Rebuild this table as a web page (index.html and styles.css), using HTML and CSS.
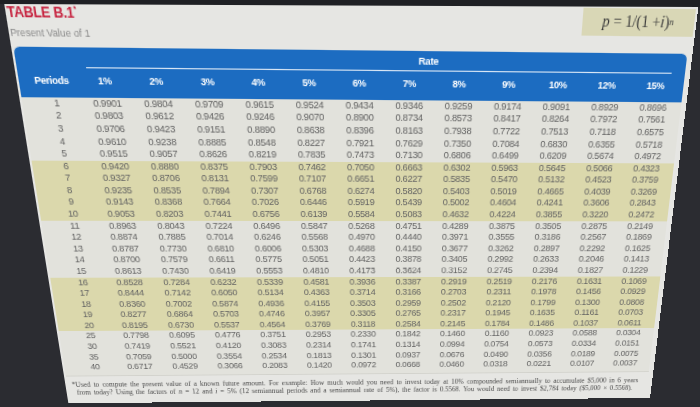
FILE: index.html
```html
<!DOCTYPE html>
<html>
<head>
<meta charset="utf-8">
<link rel="stylesheet" href="styles.css">
</head>
<body>
<div class="screen">
  <div class="sheet">
    <div class="top">
      <div class="heading">
        <div class="title">TABLE B.1<sup>*</sup></div>
        <div class="subtitle">Present Value of 1</div>
      </div>
      <div class="formula"><i>p</i>&nbsp;= 1/(1 + <i>i</i>)<sup><i>n</i></sup></div>
    </div>
    <div class="table">
      <div class="thead">
        <div class="rate">Rate</div>
        <div class="rule"></div>
        <div class="cols"><span>Periods</span><span>1%</span><span>2%</span><span>3%</span><span>4%</span><span>5%</span><span>6%</span><span>7%</span><span>8%</span><span>9%</span><span>10%</span><span>12%</span><span>15%</span></div>
      </div>
      <div class="tbody">
        <div class="row"><span>1</span><span>0.9901</span><span>0.9804</span><span>0.9709</span><span>0.9615</span><span>0.9524</span><span>0.9434</span><span>0.9346</span><span>0.9259</span><span>0.9174</span><span>0.9091</span><span>0.8929</span><span>0.8696</span></div>
        <div class="row"><span>2</span><span>0.9803</span><span>0.9612</span><span>0.9426</span><span>0.9246</span><span>0.9070</span><span>0.8900</span><span>0.8734</span><span>0.8573</span><span>0.8417</span><span>0.8264</span><span>0.7972</span><span>0.7561</span></div>
        <div class="row"><span>3</span><span>0.9706</span><span>0.9423</span><span>0.9151</span><span>0.8890</span><span>0.8638</span><span>0.8396</span><span>0.8163</span><span>0.7938</span><span>0.7722</span><span>0.7513</span><span>0.7118</span><span>0.6575</span></div>
        <div class="row"><span>4</span><span>0.9610</span><span>0.9238</span><span>0.8885</span><span>0.8548</span><span>0.8227</span><span>0.7921</span><span>0.7629</span><span>0.7350</span><span>0.7084</span><span>0.6830</span><span>0.6355</span><span>0.5718</span></div>
        <div class="row"><span>5</span><span>0.9515</span><span>0.9057</span><span>0.8626</span><span>0.8219</span><span>0.7835</span><span>0.7473</span><span>0.7130</span><span>0.6806</span><span>0.6499</span><span>0.6209</span><span>0.5674</span><span>0.4972</span></div>
        <div class="row band"><span>6</span><span>0.9420</span><span>0.8880</span><span>0.8375</span><span>0.7903</span><span>0.7462</span><span>0.7050</span><span>0.6663</span><span>0.6302</span><span>0.5963</span><span>0.5645</span><span>0.5066</span><span>0.4323</span></div>
        <div class="row band"><span>7</span><span>0.9327</span><span>0.8706</span><span>0.8131</span><span>0.7599</span><span>0.7107</span><span>0.6651</span><span>0.6227</span><span>0.5835</span><span>0.5470</span><span>0.5132</span><span>0.4523</span><span>0.3759</span></div>
        <div class="row band"><span>8</span><span>0.9235</span><span>0.8535</span><span>0.7894</span><span>0.7307</span><span>0.6768</span><span>0.6274</span><span>0.5820</span><span>0.5403</span><span>0.5019</span><span>0.4665</span><span>0.4039</span><span>0.3269</span></div>
        <div class="row band"><span>9</span><span>0.9143</span><span>0.8368</span><span>0.7664</span><span>0.7026</span><span>0.6446</span><span>0.5919</span><span>0.5439</span><span>0.5002</span><span>0.4604</span><span>0.4241</span><span>0.3606</span><span>0.2843</span></div>
        <div class="row band"><span>10</span><span>0.9053</span><span>0.8203</span><span>0.7441</span><span>0.6756</span><span>0.6139</span><span>0.5584</span><span>0.5083</span><span>0.4632</span><span>0.4224</span><span>0.3855</span><span>0.3220</span><span>0.2472</span></div>
        <div class="row"><span>11</span><span>0.8963</span><span>0.8043</span><span>0.7224</span><span>0.6496</span><span>0.5847</span><span>0.5268</span><span>0.4751</span><span>0.4289</span><span>0.3875</span><span>0.3505</span><span>0.2875</span><span>0.2149</span></div>
        <div class="row"><span>12</span><span>0.8874</span><span>0.7885</span><span>0.7014</span><span>0.6246</span><span>0.5568</span><span>0.4970</span><span>0.4440</span><span>0.3971</span><span>0.3555</span><span>0.3186</span><span>0.2567</span><span>0.1869</span></div>
        <div class="row"><span>13</span><span>0.8787</span><span>0.7730</span><span>0.6810</span><span>0.6006</span><span>0.5303</span><span>0.4688</span><span>0.4150</span><span>0.3677</span><span>0.3262</span><span>0.2897</span><span>0.2292</span><span>0.1625</span></div>
        <div class="row"><span>14</span><span>0.8700</span><span>0.7579</span><span>0.6611</span><span>0.5775</span><span>0.5051</span><span>0.4423</span><span>0.3878</span><span>0.3405</span><span>0.2992</span><span>0.2633</span><span>0.2046</span><span>0.1413</span></div>
        <div class="row"><span>15</span><span>0.8613</span><span>0.7430</span><span>0.6419</span><span>0.5553</span><span>0.4810</span><span>0.4173</span><span>0.3624</span><span>0.3152</span><span>0.2745</span><span>0.2394</span><span>0.1827</span><span>0.1229</span></div>
        <div class="row band"><span>16</span><span>0.8528</span><span>0.7284</span><span>0.6232</span><span>0.5339</span><span>0.4581</span><span>0.3936</span><span>0.3387</span><span>0.2919</span><span>0.2519</span><span>0.2176</span><span>0.1631</span><span>0.1069</span></div>
        <div class="row band"><span>17</span><span>0.8444</span><span>0.7142</span><span>0.6050</span><span>0.5134</span><span>0.4363</span><span>0.3714</span><span>0.3166</span><span>0.2703</span><span>0.2311</span><span>0.1978</span><span>0.1456</span><span>0.0929</span></div>
        <div class="row band"><span>18</span><span>0.8360</span><span>0.7002</span><span>0.5874</span><span>0.4936</span><span>0.4155</span><span>0.3503</span><span>0.2959</span><span>0.2502</span><span>0.2120</span><span>0.1799</span><span>0.1300</span><span>0.0808</span></div>
        <div class="row band"><span>19</span><span>0.8277</span><span>0.6864</span><span>0.5703</span><span>0.4746</span><span>0.3957</span><span>0.3305</span><span>0.2765</span><span>0.2317</span><span>0.1945</span><span>0.1635</span><span>0.1161</span><span>0.0703</span></div>
        <div class="row band"><span>20</span><span>0.8195</span><span>0.6730</span><span>0.5537</span><span>0.4564</span><span>0.3769</span><span>0.3118</span><span>0.2584</span><span>0.2145</span><span>0.1784</span><span>0.1486</span><span>0.1037</span><span>0.0611</span></div>
        <div class="row"><span>25</span><span>0.7798</span><span>0.6095</span><span>0.4776</span><span>0.3751</span><span>0.2953</span><span>0.2330</span><span>0.1842</span><span>0.1460</span><span>0.1160</span><span>0.0923</span><span>0.0588</span><span>0.0304</span></div>
        <div class="row"><span>30</span><span>0.7419</span><span>0.5521</span><span>0.4120</span><span>0.3083</span><span>0.2314</span><span>0.1741</span><span>0.1314</span><span>0.0994</span><span>0.0754</span><span>0.0573</span><span>0.0334</span><span>0.0151</span></div>
        <div class="row"><span>35</span><span>0.7059</span><span>0.5000</span><span>0.3554</span><span>0.2534</span><span>0.1813</span><span>0.1301</span><span>0.0937</span><span>0.0676</span><span>0.0490</span><span>0.0356</span><span>0.0189</span><span>0.0075</span></div>
        <div class="row"><span>40</span><span>0.6717</span><span>0.4529</span><span>0.3066</span><span>0.2083</span><span>0.1420</span><span>0.0972</span><span>0.0668</span><span>0.0460</span><span>0.0318</span><span>0.0221</span><span>0.0107</span><span>0.0037</span></div>
      </div>
    </div>
    <div class="note">
      <div class="l1">*Used to compute the present value of a known future amount. For example: How much would you need to invest today at 10% compounded semiannually to accumulate $5,000 in 6 years</div>
      <div class="l2">from today? Using the factors of <i>n</i> = 12 and <i>i</i> = 5% (12 semiannual periods and a semiannual rate of 5%), the factor is 0.5568. You would need to invest $2,784 today ($5,000 × 0.5568).</div>
    </div>
  </div>
</div>
<div class="bezel"></div>
</body>
</html>
```
FILE: styles.css
```css
html, body {
  margin: 0;
  padding: 0;
}
html {
  overflow: hidden;
}
body {
  width: 700px;
  height: 407px;
  overflow: hidden;
  position: relative;
  background: #2b2c31;
  font-family: "Liberation Sans", Arial, sans-serif;
}
/* the photographed screen: a flat layout mapped onto the tilted plane */
.screen {
  width: 652.28px;
  height: 402.5px;
  overflow: hidden;
  transform-origin: 0 0;
  transform: matrix3d(1.144881, 0.015185, 0, 0.000063621, 0.198559, 1.224921, 0, 0.000500382, 0, 0, 1, 0, -18.379, -8.854, 0, 1);
}
.sheet {
  margin-left: 18.4px;
  width: 633.88px;
  height: 402.5px;
  background: #e6e6e3;
  display: flex;
  flex-direction: column;
}
.top {
  height: 45.54px;
  flex: none;
  display: flex;
  justify-content: space-between;
  align-items: flex-start;
}
.heading {
  padding: 9.52px 0 0 0.92px;
}
.title {
  font-size: 11.96px;
  line-height: 14.72px;
  font-weight: bold;
  color: #c6203d;
  letter-spacing: -0.18px;
}
.title sup {
  font-size: 6.44px;
  line-height: 0;
  vertical-align: 4.6px;
}
.subtitle {
  margin-top: 4.6px;
  font-size: 8.74px;
  line-height: 11.04px;
  color: #8a8a8a;
}
.formula {
  margin-top: 7.27px;
  margin-right: 2.76px;
  width: 105.8px;
  height: 23.92px;
  background: #d9d7b6;
  display: flex;
  align-items: center;
  justify-content: center;
  font-family: "Liberation Serif", "Times New Roman", serif;
  font-size: 13.8px;
  color: #3a3a3a;
}
.formula sup {
  font-size: 8.28px;
  line-height: 0;
  vertical-align: 5.52px;
}
.table {
  margin-left: 1.2px;
  width: 627.44px;
  flex: none;
}
.thead {
  box-sizing: border-box;
  height: 44.34px;
  padding-top: 4.6px;
  background: #1c6cc1;
  border-radius: 5.52px 5.52px 0 0;
  color: #ffffff;
  font-weight: bold;
  font-size: 9.2px;
}
.rate {
  padding-left: 371.68px;
  line-height: 11.04px;
  letter-spacing: -0.28px;
}
.rule {
  margin: 1.84px 0 0 63.2px;
  width: 551.08px;
  height: 1.38px;
  background: #dbe8f6;
}
.cols {
  margin-top: 5.98px;
  display: grid;
  grid-template-columns: 55.2px repeat(12, 47.38px);
  line-height: 11.04px;
  letter-spacing: -0.37px;
  text-align: center;
}
.cols span:first-child {
  padding-left: 5.52px;
}
.tbody {
  background: #e2e2dc;
  padding-bottom: 3.22px;
  border-bottom: 0.92px solid #d2d2cc;
}
.row {
  display: grid;
  grid-template-columns: 55.2px repeat(12, 47.38px);
  height: 11.592px;
  line-height: 11.592px;
  font-size: 9.2px;
  color: #626262;
  text-align: center;
  letter-spacing: -0.28px;
}
.row.band {
  background: #dbd8ac;
}
.row span:first-child {
  padding-left: 9.2px;
}
.note {
  margin-top: 4.78px;
  font-family: "Liberation Serif", "Times New Roman", serif;
  font-size: 7.54px;
  line-height: 9.66px;
  color: #4a4a4a;
}
.l1 {
  margin-left: 6.44px;
  width: 611.52px;
  text-align: justify;
  text-align-last: justify;
}
.l2 {
  margin-left: 10.3px;
  width: 602.05px;
  text-align: justify;
  text-align-last: justify;
}
.bezel {
  position: absolute;
  left: 0;
  top: 0;
  width: 700px;
  height: 8px;
  background: #1f2024;
  clip-path: polygon(0 0, 100% 0, 100% 7px, 0 4px);
}
```
